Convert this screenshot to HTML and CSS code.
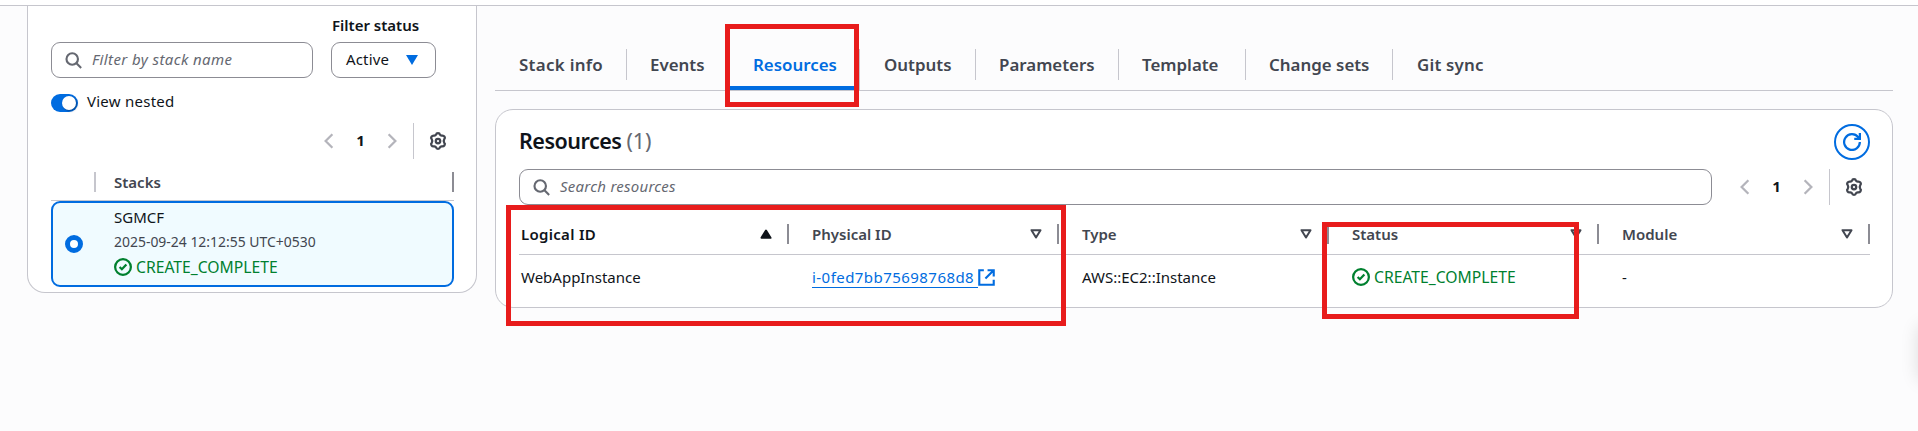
FILE: index.html
```html
<!DOCTYPE html>
<html lang="en">
<head>
<meta charset="utf-8">
<title>CloudFormation - Stack resources</title>
<link rel="stylesheet" href="styles.css">
</head>
<body>
<svg class="defs" width="0" height="0" aria-hidden="true">
  <symbol id="search" viewBox="0 0 16 16"><circle cx="6.8" cy="6.6" r="5.4"/><path d="M10.800 10.600 15.200 15"/></symbol>
  <symbol id="prev" viewBox="0 0 16 16"><path d="M11 2 5 8l6 6"/></symbol>
  <symbol id="next" viewBox="0 0 16 16"><path d="m5 2 6 6-6 6"/></symbol>
  <symbol id="gear" viewBox="0 0 16 16"><path d="M6.300 2.300Q6.500 1 8 1T9.700 2.300Q10.200 3.400 11.400 3.300Q13 3 13.800 4.200T13.600 6.300Q12.500 8 13.600 9.700Q14.600 10.700 13.800 11.800T11.400 12.700Q10.200 12.600 9.700 13.700Q9.500 15 8 15T6.300 13.700Q5.800 12.600 4.600 12.700Q3 13 2.200 11.800T2.400 9.700Q3.500 8 2.400 6.300Q1.400 5.300 2.200 4.200T4.600 3.300Q5.800 3.400 6.300 2.300Z"/><circle cx="8" cy="8" r="2"/></symbol>
  <symbol id="check" viewBox="0 0 16 16"><circle cx="8" cy="8" r="7"/><path d="m5 8 2 2 4-4.200"/></symbol>
  <symbol id="external" viewBox="0 0 16 16"><path d="M5.500 1.200H1.200v13.600h13.600V10M9 1.200h5.800V7M14.500 1.500 7 9"/></symbol>
  <symbol id="refresh" viewBox="0 0 16 16"><path d="M15 8a7 7 0 1 1-1.500-4.300L15 5.300M15 0v5.300h-5"/></symbol>
  <symbol id="sort" viewBox="0 0 12 10"><path d="M1.500 1.200h9L6 8.500z"/></symbol>
</svg>
<div class="topbar"></div>
<div class="layout">
  <aside class="stacks">
    <div class="filters">
      <div class="input"><svg class="ic search"><use href="#search"/></svg><span class="ph-side">Filter by stack name</span></div>
      <div class="field">
        <span class="label">Filter status</span>
        <div class="select"><span class="value">Active</span><svg class="caret" viewBox="0 0 12 10"><path d="M0 0h12L6 10z"/></svg></div>
      </div>
    </div>
    <div class="nested"><span class="toggle"><i></i></span><span class="nested-text">View nested</span></div>
    <div class="pager side-pager">
      <svg class="ic chev"><use href="#prev"/></svg><b>1</b><svg class="ic chev"><use href="#next"/></svg>
      <span class="rule"></span><svg class="ic gear"><use href="#gear"/></svg>
    </div>
    <div class="stack-head"><span class="bar pale"></span><span class="th-text">Stacks</span><span class="bar"></span></div>
    <div class="stack-row">
      <span class="radio"></span>
      <div class="stack-info">
        <span class="name">SGMCF</span>
        <span class="date">2025-09-24 12:12:55 UTC+0530</span>
        <span class="status"><svg class="ic check"><use href="#check"/></svg>CREATE_COMPLETE</span>
      </div>
    </div>
  </aside>
  <main class="detail">
    <nav class="tabs">
      <span class="tab t1">Stack info</span><span class="tab t2">Events</span><span class="tab t3 active">Resources</span><span class="tab t4">Outputs</span><span class="tab t5">Parameters</span><span class="tab t6">Template</span><span class="tab t7">Change sets</span><span class="tab t8">Git sync</span>
    </nav>
    <section class="panel">
      <header class="panel-head">
        <h2>Resources <span>(1)</span></h2>
        <div class="refresh"><svg class="ic"><use href="#refresh"/></svg></div>
      </header>
      <div class="tools">
        <div class="input"><svg class="ic search"><use href="#search"/></svg><span class="ph-main">Search resources</span></div>
        <div class="pager">
          <svg class="ic chev"><use href="#prev"/></svg><b>1</b><svg class="ic chev"><use href="#next"/></svg>
          <span class="rule"></span><svg class="ic gear"><use href="#gear"/></svg>
        </div>
      </div>
      <div class="grid head">
        <div class="th sorted"><span>Logical ID</span><svg class="sort up"><use href="#sort"/></svg><i class="bar"></i></div>
        <div class="th"><span>Physical ID</span><svg class="sort"><use href="#sort"/></svg><i class="bar"></i></div>
        <div class="th"><span>Type</span><svg class="sort"><use href="#sort"/></svg><i class="bar"></i></div>
        <div class="th"><span>Status</span><svg class="sort"><use href="#sort"/></svg><i class="bar"></i></div>
        <div class="th"><span>Module</span><svg class="sort"><use href="#sort"/></svg><i class="bar"></i></div>
      </div>
      <div class="grid body">
        <div class="td">WebAppInstance</div>
        <div class="td"><a class="link"><span>i-0fed7bb75698768d8</span><svg class="ic ext"><use href="#external"/></svg></a></div>
        <div class="td">AWS::EC2::Instance</div>
        <div class="td"><span class="status"><svg class="ic check"><use href="#check"/></svg>CREATE_COMPLETE</span></div>
        <div class="td">-</div>
      </div>
    </section>
  </main>
</div>
<div class="mark mark-tab"></div>
<div class="mark mark-ids"></div>
<div class="mark mark-status"></div>
<div class="edge"></div>
</body>
</html>
```
FILE: styles.css
```css
* { box-sizing: border-box; }
body {
  margin: 0;
  height: 431px;
  overflow: hidden;
  position: relative;
  background: #fcfcfd;
  color: #0f141a;
  font: 15px/20px "Noto Sans", "Open Sans", sans-serif;
  white-space: nowrap;
}
.defs { position: absolute; }
svg { flex: none; display: block; }
.ic { width: 18px; height: 18px; fill: none; stroke: currentColor; stroke-width: 2; }
.topbar { height: 6px; background: #fff; border-bottom: 1px solid #c6c6cd; }
.layout { display: flex; padding-left: 27px; gap: 18px; align-items: flex-start; }

.stacks {
  width: 450px;
  height: 287px;
  padding: 9px 22px 0 23px;
  background: #fff;
  border: 1px solid #c6c6cd;
  border-top: 0;
  border-radius: 0 0 18px 18px;
}
.filters { display: flex; align-items: flex-end; gap: 18px; }
.input {
  width: 262px;
  height: 36px;
  display: flex;
  align-items: center;
  padding-left: 13px;
  gap: 10px;
  background: #fff;
  border: 1px solid #8c8c94;
  border-radius: 9px;
  color: #656871;
  font-style: italic;
}
.search { width: 17px; height: 17px; }
.ph-side { letter-spacing: .4px; padding-bottom: 2px; }
.ph-main { letter-spacing: .25px; padding-bottom: 2px; }
.field { display: flex; flex-direction: column; gap: 7px; }
.label { font-weight: 600; padding-left: 1px; }
.select {
  width: 105px;
  height: 36px;
  display: flex;
  align-items: center;
  justify-content: space-between;
  padding: 0 17px 0 14px;
  border: 1px solid #8c8c94;
  border-radius: 9px;
}
.value { padding-bottom: 2px; letter-spacing: .15px; }
.caret { width: 12px; height: 10px; fill: #006ce0; }
.nested { display: flex; align-items: center; gap: 9px; height: 20px; margin-top: 15px; }
.nested-text { padding-bottom: 4px; letter-spacing: .25px; }
.toggle {
  width: 27px;
  height: 18px;
  display: flex;
  justify-content: flex-end;
  padding: 2px;
  border-radius: 9px;
  background: #006ce0;
}
.toggle i { width: 14px; height: 14px; border-radius: 50%; background: #fff; box-shadow: 1px 1px 2px #00204a88; }

.pager { display: flex; align-items: center; height: 36px; }
.pager b { width: 45px; text-align: center; font-weight: 700; padding-bottom: 2px; }
.chev { color: #b4b4bb; }
.rule { width: 1px; height: 36px; background: #c6c6cd; margin: 0 15px 0 12px; }
.gear { color: #424650; }
.side-pager { justify-content: flex-end; padding-right: 7px; margin-top: 10px; }

.stack-head {
  height: 42px;
  display: flex;
  align-items: center;
  padding: 4px 0 0 43px;
  border-bottom: 1px solid #c6c6cd;
  color: #424650;
  font-weight: 600;
}
.bar { width: 2px; height: 20px; background: #8c8c94; }
.pale { background: #c6c6cd; }
.th-text { flex: 1; padding-left: 18px; }
.stack-row {
  height: 86px;
  display: flex;
  align-items: center;
  gap: 31px;
  padding-left: 12px;
  background: #f0fbff;
  border: 2px solid #006ce0;
  border-radius: 9px;
}
.radio { width: 18px; height: 18px; border-radius: 50%; border: 5px solid #006ce0; background: #fff; }
.stack-info { display: flex; flex-direction: column; gap: 5px; padding-bottom: 5px; }
.date { font-size: 13.95px; color: #424650; }
.status { display: flex; align-items: center; gap: 4px; color: #00802f; font-size: 15.7px; }

.detail { width: 1398px; padding-top: 43px; }
.tabs {
  height: 42px;
  display: flex;
  align-items: flex-start;
  border-bottom: 1px solid #c6c6cd;
  color: #424650;
  font-size: 16.900px;
  font-weight: 600;
}
.tab { height: 31px; line-height: 31px; padding-left: 24px; border-right: 1px solid #c6c6cd; }
.t1 { width: 132px; letter-spacing: .3px; }
.t2 { width: 102px; padding-left: 23px; }
.t3 { width: 131px; }
.t4 { width: 116px; }
.t5 { width: 143px; padding-left: 23px; }
.t6 { width: 127px; padding-left: 23px; }
.t7 { width: 147px; padding-left: 23px; }
.t8 { border: 0; letter-spacing: .2px; }
.active { color: #006ce0; height: 41px; background: linear-gradient(#006ce0, #006ce0) 0 100% / 100% 4px no-repeat; }

.panel {
  height: 199px;
  margin-top: 18px;
  padding: 14px 22px 0 23px;
  background: #fff;
  border: 1px solid #c6c6cd;
  border-radius: 18px;
}
.panel-head { display: flex; justify-content: space-between; align-items: center; height: 36px; }
h2 { margin: 0; font-size: 21.500px; font-weight: 600; line-height: 34px; letter-spacing: -.5px; padding-bottom: 2px; }
h2 span { color: #656871; font-weight: 400; letter-spacing: -.1px; }
.refresh {
  width: 36px;
  height: 36px;
  display: grid;
  place-items: center;
  border: 2px solid #006ce0;
  border-radius: 50%;
  color: #006ce0;
}
.tools { display: flex; justify-content: space-between; padding-right: 7px; margin-top: 9px; }
.tools .input { width: 1193px; }
.grid { display: grid; grid-template-columns: 270px 270px 270px 270px 271px; }
.head { height: 50px; padding-top: 19px; border-bottom: 1px solid #c6c6cd; color: #424650; font-weight: 600; }
.th { display: flex; align-items: center; height: 20px; padding-left: 23px; }
.th span { flex: 1; padding-bottom: 1px; }
.sorted, .td:first-child { padding-left: 2px; }
.sorted { color: #0f141a; letter-spacing: .3px; }
.sort { width: 12px; height: 10px; margin-right: 15px; fill: none; stroke: currentColor; stroke-width: 2; stroke-linejoin: round; }
.up { fill: currentColor; transform: rotate(180deg); }
.td { display: flex; align-items: center; height: 20px; padding-left: 23px; }
.body { padding-top: 12px; }
.link { display: flex; align-items: center; color: #006ce0; }
.link span { border-bottom: 1px solid #006ce0; letter-spacing: .45px; padding-right: 4px; }
.ext { width: 17px; height: 17px; }

.mark { position: absolute; border: 5px solid #e81c1c; }
.mark-tab { left: 725px; top: 24px; width: 134px; height: 83px; }
.mark-ids { left: 506px; top: 205px; width: 560px; height: 121px; }
.mark-status { left: 1322px; top: 222px; width: 257px; height: 97px; }
.edge { position: absolute; left: 1918px; top: 325px; width: 40px; height: 56px; border-radius: 8px; box-shadow: 0 0 18px #00000020; }
```
